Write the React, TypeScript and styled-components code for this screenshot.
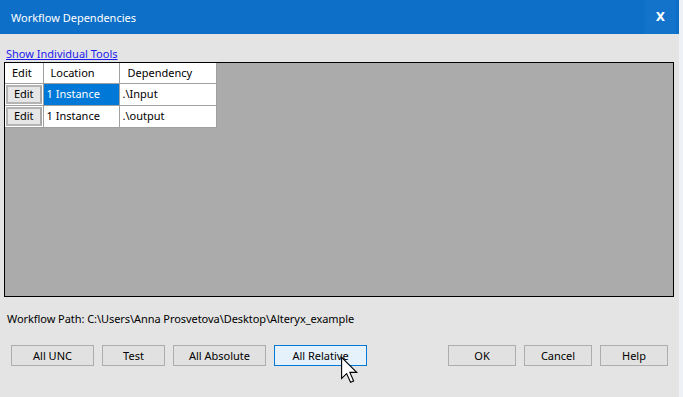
import React from "react";
import styled, { createGlobalStyle } from "styled-components";

const Global = createGlobalStyle`
  html, body { margin: 0; padding: 0; background: #eef2f6; }
  body { font-family: "Noto Sans", "Open Sans", sans-serif; font-size: 11px; color: #000; }
  * { box-sizing: border-box; }
`;

const Dialog = styled.div`
  position: relative;
  width: 679px;
  height: 397px;
  background: #e4e4e4;
  display: flex;
  flex-direction: column;
  overflow: hidden;
`;

const TitleBar = styled.div`
  height: 34px;
  background: #0d6fc7;
  display: flex;
  align-items: center;
  justify-content: space-between;
  padding-left: 11px;
  color: #fff;
`;

const Title = styled.span`
  font-size: 11px;
`;

const CloseButton = styled.div`
  width: 31px;
  height: 34px;
  margin-right: 3px;
  background: #1373cb;
  display: flex;
  align-items: center;
  justify-content: center;
  font-family: "DejaVu Sans", sans-serif;
  font-weight: bold;
  font-size: 12px;
  color: #fff;
`;

const LinkRow = styled.div`
  height: 28px;
  padding: 12px 0 0 6px;
  line-height: 16px;
`;

const Link = styled.a`
  color: #1a1aee;
  text-decoration: underline;
  cursor: pointer;
`;

const Panel = styled.div`
  margin-left: 4px;
  width: 670px;
  height: 235px;
  border: 1px solid #000;
  background: #ababab;
`;

const Grid = styled.table`
  border-collapse: collapse;
  background: #fff;
`;

const Cell = styled.td<{ $w?: number; $selected?: boolean; $pad?: number }>`
  width: ${(p) => p.$w ?? 0}px;
  height: 22px;
  padding: 0 0 0 ${(p) => p.$pad ?? 3}px;
  border: 1px solid #a0a0a0;
  border-top: none;
  border-left: none;
  white-space: nowrap;
  background: ${(p) => (p.$selected ? "#0078d7" : "#fff")};
  color: ${(p) => (p.$selected ? "#fff" : "#000")};
  line-height: 14px;
`;

const HeadCell = styled(Cell)`
  height: 20px;
  padding-left: ${(p) => p.$pad ?? 7}px;
`;

const EditCell = styled.td`
  width: 38px;
  height: 22px;
  padding: 1px;
  border-right: 1px solid #a0a0a0;
  border-bottom: 1px solid #a0a0a0;
`;

const EditButton = styled.div`
  height: 19px;
  border: 2px solid #b4b4b4;
  border-right-color: #a8a8a8;
  background: #e6e6e6;
  display: flex;
  align-items: center;
  justify-content: center;
  line-height: 14px;
`;

const PathRow = styled.div`
  margin-top: 14px;
  padding-left: 7px;
  line-height: 16px;
  height: 16px;
  letter-spacing: -0.06px;
`;

const ButtonRow = styled.div`
  margin-top: 18px;
  padding: 0 11px;
  display: flex;
  justify-content: space-between;
`;

const ButtonGroup = styled.div`
  display: flex;
  gap: 8px;
`;

const Button = styled.div<{ $w: number; $hover?: boolean }>`
  width: ${(p) => p.$w}px;
  height: 21px;
  border: 1px solid ${(p) => (p.$hover ? "#0078d7" : "#adadad")};
  background: ${(p) => (p.$hover ? "#e5f1fb" : "#e1e1e1")};
  display: flex;
  align-items: center;
  justify-content: center;
  line-height: 14px;
  padding-top: 1px;
`;

const Cursor = styled.svg`
  position: absolute;
  left: 340px;
  top: 356px;
  pointer-events: none;
`;

const rows = [
  { loc: "1 Instance", dep: ".\\Input", selected: true },
  { loc: "1 Instance", dep: ".\\output", selected: false },
];

export default function App() {
  return (
    <>
      <Global />
      <Dialog>
        <TitleBar>
          <Title>Workflow Dependencies</Title>
          <CloseButton>X</CloseButton>
        </TitleBar>
        <LinkRow>
          <Link>Show Individual Tools</Link>
        </LinkRow>
        <Panel>
          <Grid>
            <tbody>
              <tr>
                <HeadCell $w={38}>Edit</HeadCell>
                <HeadCell $w={76}>Location</HeadCell>
                <HeadCell $w={97} $pad={8}>Dependency</HeadCell>
              </tr>
              {rows.map((r, i) => (
                <tr key={i}>
                  <EditCell>
                    <EditButton>Edit</EditButton>
                  </EditCell>
                  <Cell $w={76} $selected={r.selected}>{r.loc}</Cell>
                  <Cell $w={97}>{r.dep}</Cell>
                </tr>
              ))}
            </tbody>
          </Grid>
        </Panel>
        <PathRow>Workflow Path: C:\Users\Anna Prosvetova\Desktop\Alteryx_example</PathRow>
        <ButtonRow>
          <ButtonGroup>
            <Button $w={83}>All UNC</Button>
            <Button $w={63}>Test</Button>
            <Button $w={93}>All Absolute</Button>
            <Button $w={93} $hover>All Relative</Button>
          </ButtonGroup>
          <ButtonGroup>
            <Button $w={68}>OK</Button>
            <Button $w={68}>Cancel</Button>
            <Button $w={68}>Help</Button>
          </ButtonGroup>
        </ButtonRow>
        <Cursor width="20" height="28" viewBox="0 0 14 20">
          <path
            d="M1 1 L1 16 L4.6 12.6 L7.4 18.8 L9.6 17.8 L6.9 11.7 L11.8 11.7 Z"
            fill="#fff"
            stroke="#000"
            strokeWidth="0.8"
            strokeLinejoin="miter"
          />
        </Cursor>
      </Dialog>
    </>
  );
}
